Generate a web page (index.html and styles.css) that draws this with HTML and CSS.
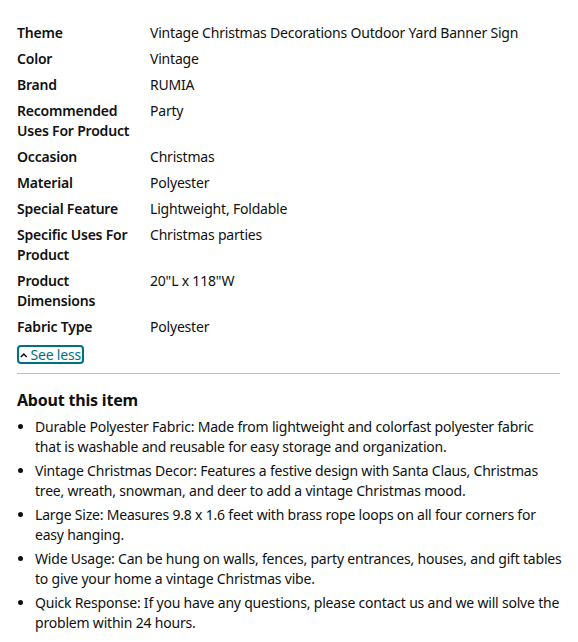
FILE: index.html
```html
<!DOCTYPE html>
<html lang="en">
<head>
    <meta charset="UTF-8">
    <title>Product details</title>
    <link rel="stylesheet" href="styles.css">
</head>
<body>
    <div class="details">
        <table class="specs">
            <tr><td class="label">Theme</td><td class="value">Vintage Christmas Decorations Outdoor Yard Banner Sign</td></tr>
            <tr><td class="label">Color</td><td class="value">Vintage</td></tr>
            <tr><td class="label">Brand</td><td class="value">RUMIA</td></tr>
            <tr><td class="label">Recommended Uses For Product</td><td class="value">Party</td></tr>
            <tr><td class="label">Occasion</td><td class="value">Christmas</td></tr>
            <tr><td class="label">Material</td><td class="value">Polyester</td></tr>
            <tr><td class="label">Special Feature</td><td class="value">Lightweight, Foldable</td></tr>
            <tr><td class="label">Specific Uses For Product</td><td class="value">Christmas parties</td></tr>
            <tr><td class="label">Product Dimensions</td><td class="value">20"L x 118"W</td></tr>
            <tr><td class="label">Fabric Type</td><td class="value">Polyester</td></tr>
        </table>

        <a href="#" class="see-less">
            <svg width="11" height="8" viewBox="0 0 11 8"><path d="M1.2 6.8 L5.5 2.5 L9.8 6.8" fill="none" stroke="#0F1111" stroke-width="2.2"/></svg>
            See less
        </a>

        <hr class="divider">

        <h2 class="about-title">About this item</h2>
        <ul class="about-list">
            <li>Durable Polyester Fabric: Made from lightweight and colorfast polyester fabric that is washable and reusable for easy storage and organization.</li>
            <li>Vintage Christmas Decor: Features a festive design with Santa Claus, Christmas tree, wreath, snowman, and deer to add a vintage Christmas mood.</li>
            <li>Large Size: Measures 9.8 x 1.6 feet with brass rope loops on all four corners for easy hanging.</li>
            <li>Wide Usage: Can be hung on walls, fences, party entrances, houses, and gift tables to give your home a vintage Christmas vibe.</li>
            <li>Quick Response: If you have any questions, please contact us and we will solve the problem within 24 hours.</li>
        </ul>
    </div>
</body>
</html>
```

FILE: styles.css
```css
/* General Styling */
body {
    margin: 0;
    padding: 0;
    font-family: "Noto Sans", Arial, sans-serif;
    font-size: 14px;
    line-height: 20px;
    letter-spacing: -0.2px;
    color: #0F1111;
    background: #fff;
}
.details {
    padding: 20px 18px 0 17px;
}
.specs {
    border-collapse: collapse;
}
.specs td {
    padding: 3px 0;
    vertical-align: top;
}
.specs .label {
    width: 123px;
    padding-right: 10px;
    font-weight: 600;
}
.see-less {
    display: inline-flex;
    align-items: center;
    gap: 3px;
    margin-top: 5px;
    padding: 0 1px;
    width: 61px;
    overflow: hidden;
    white-space: nowrap;
    color: #007185;
    text-decoration: none;
    border: 2px solid #007185;
    border-radius: 4px;
    line-height: 15px;
}
.divider {
    border: none;
    border-top: 1px solid #BBBFBF;
    margin: 9px 0 0 0;
}
.about-title {
    font-size: 16px;
    font-weight: bold;
    line-height: 24px;
    margin: 14px 0 5px 0;
}
.about-list {
    margin: 0 -2px 0 0;
    padding-left: 18px;
}
.about-list li {
    margin-bottom: 4px;
}
```
